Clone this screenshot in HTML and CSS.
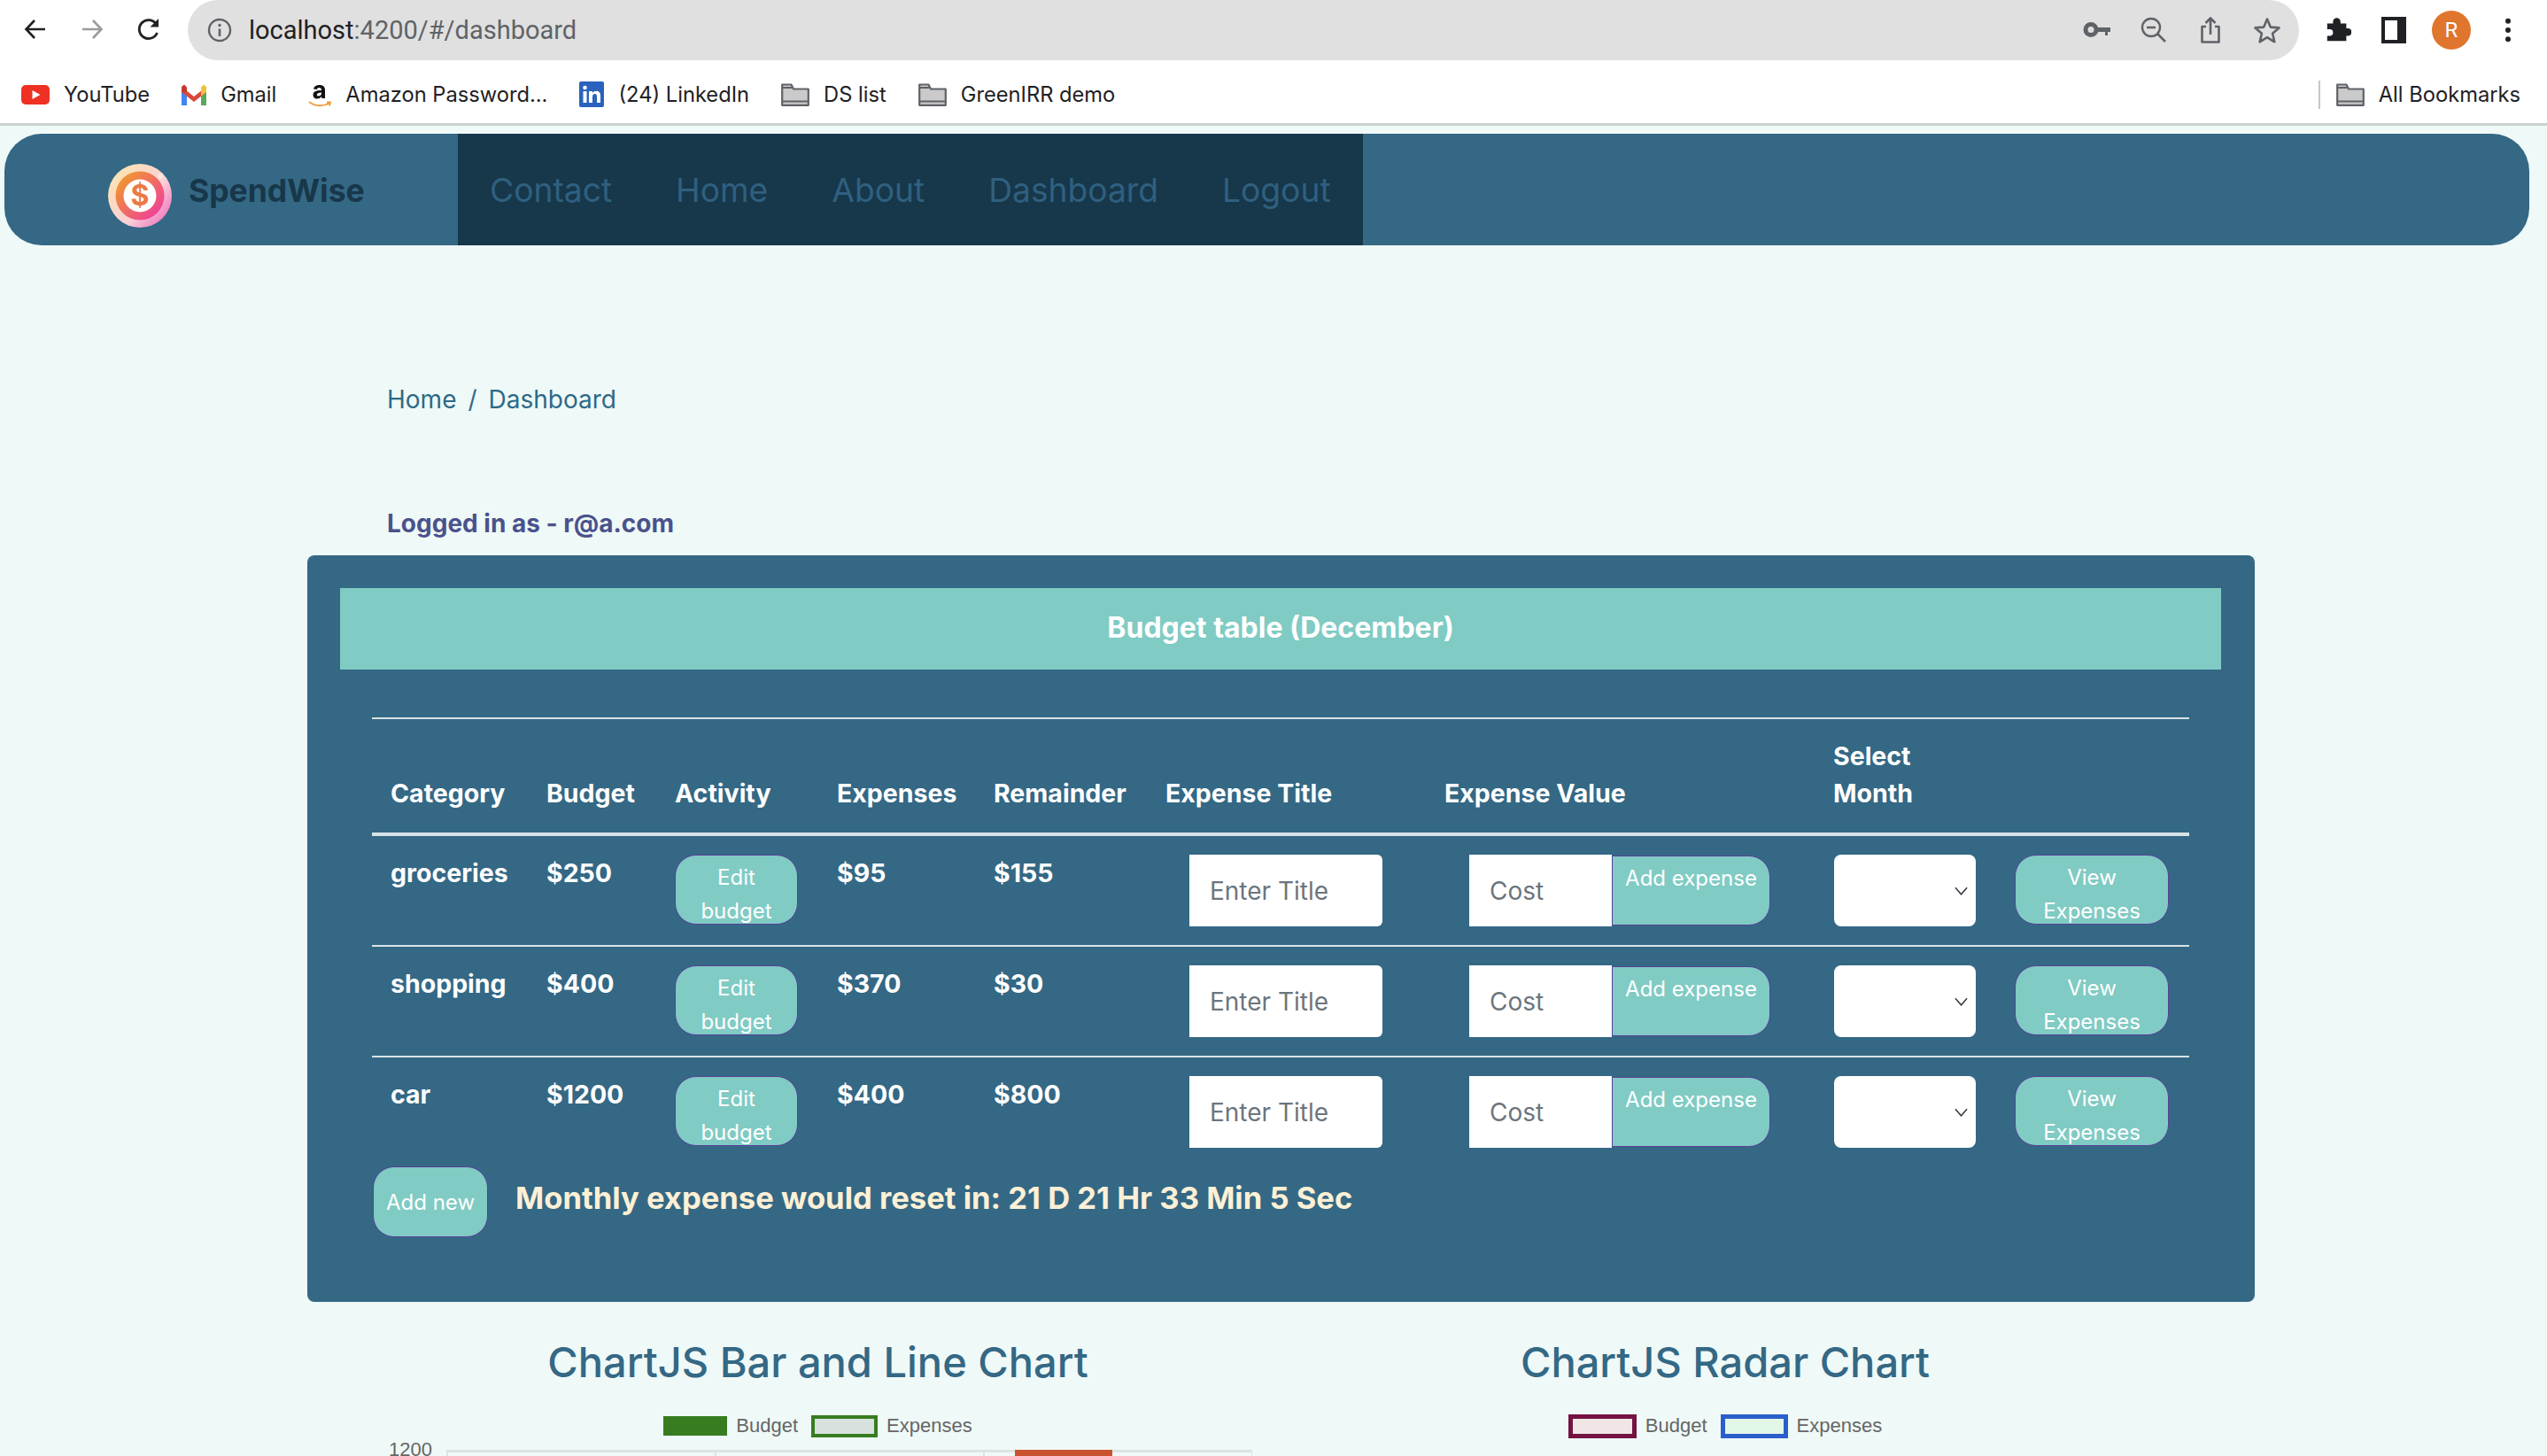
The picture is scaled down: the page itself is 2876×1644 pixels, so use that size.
FILE: index.html
```html
<!DOCTYPE html>
<html lang="en">
<head>
  <meta charset="UTF-8" />
  <title>SpendWise - Dashboard</title>
  <link rel="stylesheet" href="styles.css">
</head>
<body>

<!-- Browser toolbar -->
<div class="toolbar">
  <svg class="tool-icon nav-back" viewBox="0 0 30 30"><path d="M26 15H5M14 5L4.500 15L14 25" fill="none" stroke="#1f2124" stroke-width="2.600"/></svg>
  <svg class="tool-icon nav-forward" viewBox="0 0 30 30"><path d="M4 15H25M16 5L25.500 15L16 25" fill="none" stroke="#9a9b9d" stroke-width="2.600"/></svg>
  <svg class="tool-icon nav-reload" viewBox="0 0 30 30"><path d="M24.500 19A10.500 10.500 0 1 1 23 8.500" fill="none" stroke="#1f2124" stroke-width="2.800"/><path d="M26 3V12.500H16.500Z" fill="#1f2124"/></svg>
  <div class="address">
    <svg class="addr-info" viewBox="0 0 28 28"><circle cx="14" cy="14" r="12" fill="none" stroke="#5f6368" stroke-width="2.400"/><path d="M14 12.500V21" stroke="#5f6368" stroke-width="2.600"/><circle cx="14" cy="8.500" r="1.700" fill="#5f6368"/></svg>
    <span class="url"><span class="url-host">localhost</span>:4200/#/dashboard</span>
    <div class="addr-actions">
      <svg class="addr-icon" viewBox="0 0 32 32"><path d="M15 13H31V18H28V22H25V18H15Z" fill="#5f6368"/><circle cx="9" cy="15.500" r="6" fill="none" stroke="#5f6368" stroke-width="5"/></svg>
      <svg class="addr-icon" viewBox="0 0 32 32"><circle cx="13" cy="13" r="10" fill="none" stroke="#5f6368" stroke-width="2.400"/><path d="M8 13H18M20 20L29 29" stroke="#5f6368" stroke-width="2.600"/></svg>
      <svg class="addr-icon" viewBox="0 0 32 32"><path d="M11 12H6.500V29.500H25.500V12H21M16 21V2.500M10.500 8L16 2.500L21.500 8" fill="none" stroke="#5f6368" stroke-width="2.600" stroke-linejoin="round"/></svg>
      <svg class="addr-icon" viewBox="0 0 32 32"><path d="M16 3.500L19.800 12.600L29.500 13.400L22.100 19.800L24.300 29.300L16 24.200L7.700 29.300L9.900 19.800L2.500 13.400L12.200 12.600Z" fill="none" stroke="#5f6368" stroke-width="2.600" stroke-linejoin="round"/></svg>
    </div>
  </div>
  <svg class="ext-icon" viewBox="0 0 32 32"><path d="M3 9H10V7A4.500 4.500 0 0 1 19 7V9H26V15H28A4.500 4.500 0 0 1 28 24H26V30H3V24H6A3.500 3.500 0 0 0 6 16H3Z" fill="#1f2124"/></svg>
  <span class="panel-icon"><span class="panel-slot"></span></span>
  <span class="avatar">R</span>
  <svg class="dots-icon" viewBox="0 0 8 32"><circle cx="4" cy="5" r="3.200" fill="#1f2124"/><circle cx="4" cy="16" r="3.200" fill="#1f2124"/><circle cx="4" cy="27" r="3.200" fill="#1f2124"/></svg>
</div>

<!-- Bookmarks -->
<div class="bookmarks">
  <div class="bookmark">
    <svg class="bm-icon" viewBox="0 0 32 22"><rect width="32" height="22" rx="5" fill="#ee3124"/><path d="M12.500 6L21.500 11L12.500 16Z" fill="#fff"/></svg>
    <span>YouTube</span>
  </div>
  <div class="bookmark">
    <svg class="bm-icon gmail" viewBox="0 0 28 24"><path d="M0 4V24H6V9Z" fill="#4285f4"/><path d="M28 4V24H22V9Z" fill="#5aa85a"/><path d="M0 3L14 14L28 3V9L14 20L0 9Z" fill="#d9493b"/><path d="M22 3.500L25 0.500L28 3V9L22 13.500Z" fill="#f4c03c"/><path d="M0 3L3 0.500L6 3.500V9L0 9Z" fill="#c5392c"/></svg>
    <span>Gmail</span>
  </div>
  <div class="bookmark">
    <svg class="bm-icon amazon" viewBox="0 0 26 32"><path d="M6 9.500C6.500 6.500 9 5 12.500 5C16.500 5 19 6.800 19 10.500V20H15.500L15 18C13.500 19.800 12 20.500 10 20.500C7 20.500 5.500 18.500 5.500 16C5.500 12.500 8.500 11 15 11V10.500C15 9 14 8 12.500 8C11 8 10 8.700 9.700 10Z M15 13.500C11.500 13.700 9.800 14.500 9.800 15.800C9.800 16.900 10.500 17.500 11.500 17.500C13 17.500 15 16.500 15 14.500Z" fill="#111"/><path d="M1 24C8 29.500 17 29.500 24 25.500M21 24.500L25 24.500L24 28.500" fill="none" stroke="#f19e39" stroke-width="2"/></svg>
    <span>Amazon Password...</span>
  </div>
  <div class="bookmark">
    <svg class="bm-icon linkedin" viewBox="0 0 28 29"><rect width="28" height="29" rx="2" fill="#2a62bd"/><rect x="4.500" y="11" width="4" height="13" fill="#fff"/><circle cx="6.500" cy="7" r="2.300" fill="#fff"/><path d="M11 11H15V13C16 11.500 17.500 10.700 19.500 10.700C22.500 10.700 24 12.700 24 16V24H20V17C20 15 19.300 14 17.800 14C16 14 15 15.200 15 17.200V24H11Z" fill="#fff"/></svg>
    <span>(24) LinkedIn</span>
  </div>
  <div class="bookmark">
    <svg class="bm-icon folder" viewBox="0 0 32 26"><path d="M1.200 4V24.800H30.800V6.500H14L11.500 1.500H1.200Z" fill="#cacaca" stroke="#5f6368" stroke-width="2.200" stroke-linejoin="round"/><path d="M2 5H12M2 20.500H30" stroke="#5f6368" stroke-width="1.800"/></svg>
    <span>DS list</span>
  </div>
  <div class="bookmark">
    <svg class="bm-icon folder" viewBox="0 0 32 26"><path d="M1.200 4V24.800H30.800V6.500H14L11.500 1.500H1.200Z" fill="#cacaca" stroke="#5f6368" stroke-width="2.200" stroke-linejoin="round"/><path d="M2 5H12M2 20.500H30" stroke="#5f6368" stroke-width="1.800"/></svg>
    <span>GreenIRR demo</span>
  </div>
  <div class="bookmark bookmark-all">
    <svg class="bm-icon folder" viewBox="0 0 32 26"><path d="M1.200 4V24.800H30.800V6.500H14L11.500 1.500H1.200Z" fill="#cacaca" stroke="#5f6368" stroke-width="2.200" stroke-linejoin="round"/><path d="M2 5H12M2 20.500H30" stroke="#5f6368" stroke-width="1.800"/></svg>
    <span>All Bookmarks</span>
  </div>
</div>

<!-- Navbar -->
<nav class="navbar">
  <div class="brand">
    <svg class="logo" viewBox="0 0 72 72">
      <defs>
        <linearGradient id="logoOuter" x1="0.100" y1="0.200" x2="0.900" y2="0.900">
          <stop offset="0" stop-color="#fbe2b4"/>
          <stop offset="0.600" stop-color="#f9cfd8"/>
          <stop offset="1" stop-color="#f079c0"/>
        </linearGradient>
        <linearGradient id="logoInner" x1="0.100" y1="0.100" x2="0.900" y2="0.900">
          <stop offset="0" stop-color="#f09a2c"/>
          <stop offset="1" stop-color="#ef3f9a"/>
        </linearGradient>
      </defs>
      <circle cx="36" cy="36" r="36" fill="url(#logoOuter)"/>
      <circle cx="36" cy="36" r="27.500" fill="url(#logoInner)"/>
      <circle cx="36" cy="36" r="18.500" fill="#fff"/>
      <circle cx="59" cy="14" r="3" fill="#fbe9dc"/>
      <text class="logo-sign" x="36" y="47" text-anchor="middle">$</text>
    </svg>
    <span class="brand-name">SpendWise</span>
  </div>
  <ul class="nav-links">
    <li>Contact</li>
    <li>Home</li>
    <li>About</li>
    <li>Dashboard</li>
    <li>Logout</li>
  </ul>
</nav>

<main class="content">
  <div class="breadcrumb"><span>Home</span><span class="crumb-sep">/</span><span>Dashboard</span></div>
  <div class="logged-in">Logged in as - r@a.com</div>

  <section class="budget-card">
    <div class="budget-header">Budget table (December)</div>
    <table class="budget-table">
      <colgroup>
        <col class="c-cat"><col class="c-budget"><col class="c-activity"><col class="c-exp">
        <col class="c-rem"><col class="c-title"><col class="c-value"><col class="c-month"><col class="c-view">
      </colgroup>
      <thead>
        <tr>
          <th>Category</th>
          <th>Budget</th>
          <th>Activity</th>
          <th>Expenses</th>
          <th>Remainder</th>
          <th>Expense Title</th>
          <th>Expense Value</th>
          <th>Select<br>Month</th>
          <th></th>
        </tr>
      </thead>
      <tbody>
        <tr>
          <td>groceries</td>
          <td>$250</td>
          <td><button class="btn btn-two">Edit budget</button></td>
          <td>$95</td>
          <td>$155</td>
          <td><input class="field field-title" placeholder="Enter Title"></td>
          <td>
            <div class="input-group">
              <input class="field field-cost" placeholder="Cost">
              <button class="btn btn-add">Add expense</button>
            </div>
          </td>
          <td><select class="month"><option></option></select></td>
          <td><button class="btn btn-two btn-view">View Expenses</button></td>
        </tr>
        <tr>
          <td>shopping</td>
          <td>$400</td>
          <td><button class="btn btn-two">Edit budget</button></td>
          <td>$370</td>
          <td>$30</td>
          <td><input class="field field-title" placeholder="Enter Title"></td>
          <td>
            <div class="input-group">
              <input class="field field-cost" placeholder="Cost">
              <button class="btn btn-add">Add expense</button>
            </div>
          </td>
          <td><select class="month"><option></option></select></td>
          <td><button class="btn btn-two btn-view">View Expenses</button></td>
        </tr>
        <tr>
          <td>car</td>
          <td>$1200</td>
          <td><button class="btn btn-two">Edit budget</button></td>
          <td>$400</td>
          <td>$800</td>
          <td><input class="field field-title" placeholder="Enter Title"></td>
          <td>
            <div class="input-group">
              <input class="field field-cost" placeholder="Cost">
              <button class="btn btn-add">Add expense</button>
            </div>
          </td>
          <td><select class="month"><option></option></select></td>
          <td><button class="btn btn-two btn-view">View Expenses</button></td>
        </tr>
      </tbody>
    </table>
    <div class="budget-footer">
      <button class="btn btn-new">Add new</button>
      <span class="reset-note">Monthly expense would reset in: 21 D 21 Hr 33 Min 5 Sec</span>
    </div>
  </section>

  <!-- Charts, cut off by the bottom of the window -->
  <section class="charts">
    <div class="chart chart-bar">
      <h2 class="chart-title">ChartJS Bar and Line Chart</h2>
      <div class="legend">
        <span class="swatch swatch-green"></span><span class="legend-label">Budget</span>
        <span class="swatch swatch-green-line"></span><span class="legend-label">Expenses</span>
      </div>
      <div class="plot">
        <span class="tick-label">1200</span>
        <div class="plot-area">
          <span class="bar-red"></span>
        </div>
      </div>
    </div>
    <div class="chart chart-radar">
      <h2 class="chart-title">ChartJS Radar Chart</h2>
      <div class="legend">
        <span class="swatch swatch-maroon"></span><span class="legend-label">Budget</span>
        <span class="swatch swatch-blue"></span><span class="legend-label">Expenses</span>
      </div>
    </div>
  </section>
</main>

</body>
</html>
```

FILE: styles.css
```css
html, body {
  height: 100%;
}

body {
  margin: 0;
  background: #eff9f7;
  font-family: Inter, "Noto Sans", sans-serif;
  overflow: hidden;
}

/* browser chrome */
.toolbar {
  height: 71px;
  background: #fff;
  display: flex;
  align-items: flex-start;
}

.tool-icon {
  width: 30px;
  height: 30px;
  margin-top: 18px;
  flex: none;
}

.nav-back { margin-left: 25px; }
.nav-forward { margin-left: 34px; }
.nav-reload { margin-left: 34px; }

.address {
  width: 2384px;
  height: 68px;
  margin-left: 29px;
  background: #e0e0e0;
  border-radius: 34px;
  display: flex;
  align-items: center;
  flex: none;
}

.addr-info {
  width: 28px;
  height: 28px;
  margin-left: 22px;
}

.url {
  margin-left: 19px;
  font-family: Roboto, sans-serif;
  font-size: 29px;
  color: #5f6368;
}

.url-host {
  color: #1f2124;
}

.addr-actions {
  margin-left: auto;
  margin-right: 20px;
  display: flex;
  gap: 32px;
}

.addr-icon {
  width: 32px;
  height: 32px;
}

.ext-icon {
  width: 30px;
  height: 30px;
  margin: 18px 0 0 29px;
  flex: none;
}

.panel-icon {
  width: 28px;
  height: 30px;
  margin: 19px 0 0 34px;
  background: #1f2124;
  flex: none;
  display: flex;
  padding: 4px 0 4px 4px;
  box-sizing: border-box;
}

.panel-slot {
  width: 14px;
  background: #fff;
}

.avatar {
  width: 44px;
  height: 44px;
  margin: 12px 0 0 29px;
  border-radius: 50%;
  background: #e0752d;
  color: #fff;
  font-family: Roboto, sans-serif;
  font-size: 24px;
  display: flex;
  align-items: center;
  justify-content: center;
  flex: none;
}

.dots-icon {
  width: 8px;
  height: 30px;
  margin: 19px 0 0 38px;
  flex: none;
}

.bookmarks {
  height: 65px;
  padding: 3px 30px 0 24px;
  background: #fff;
  border-bottom: 3px solid #c9d3d1;
  display: flex;
  align-items: center;
  gap: 36px;
  font-family: Inter, sans-serif;
  font-size: 23.700px;
  color: #1f2124;
}

.bookmark {
  display: flex;
  align-items: center;
  gap: 16px;
}

.bm-icon {
  width: 32px;
  height: 22px;
}

.gmail { width: 28px; height: 24px; }
.amazon { width: 26px; height: 32px; }
.linkedin { width: 28px; height: 29px; }
.folder { width: 32px; height: 26px; }

.bookmark-all {
  margin-left: auto;
  padding-left: 18px;
  border-left: 2px solid #c4c7c5;
  height: 32px;
}

/* navbar */
.navbar {
  height: 126px;
  margin: 9px 20px 0 5px;
  background: #346885;
  border-radius: 42px;
  display: flex;
  overflow: hidden;
}

.brand {
  width: 512px;
  padding-left: 117px;
  box-sizing: border-box;
  display: flex;
  align-items: center;
  gap: 19px;
}

.logo {
  width: 72px;
  height: 72px;
  margin-top: 14px;
}

.logo-sign {
  font-family: Inter, sans-serif;
  font-size: 32px;
  font-weight: 700;
  fill: #ec7a45;
}

.brand-name {
  margin-top: 3px;
  font-size: 35.500px;
  font-weight: 700;
  color: #17374a;
}

.nav-links {
  margin: 0;
  padding: 0;
  list-style: none;
  background: #17374a;
  display: flex;
  align-items: center;
}

.nav-links li {
  padding: 0 36px;
  font-size: 37.200px;
  color: #2f6080;
}

/* page */
.content {
  margin: 0 330px 0 347px;
}

.breadcrumb {
  margin-top: 151px;
  padding-left: 90px;
  font-size: 28px;
  line-height: 46px;
  color: #2d6a88;
}

.crumb-sep {
  margin: 0 13px;
}

.logged-in {
  margin-top: 94px;
  padding-left: 90px;
  font-size: 28px;
  font-weight: 700;
  line-height: 46px;
  color: #4a528c;
}

.budget-card {
  margin-top: 13px;
  height: 843px;
  padding: 37px 38px 0 37px;
  box-sizing: border-box;
  background: #346885;
  border-radius: 8px;
}

.budget-header {
  height: 92px;
  padding-bottom: 3px;
  box-sizing: border-box;
  background: #80cbc4;
  color: #fff;
  font-size: 32px;
  font-weight: 700;
  display: flex;
  align-items: center;
  justify-content: center;
}

.budget-table {
  width: 2052px;
  margin: 54px 0 0 36px;
  border-collapse: collapse;
  table-layout: fixed;
  color: #fff;
  font-size: 28.500px;
  font-weight: 700;
  line-height: 42px;
}

.c-cat { width: 176px; }
.c-budget { width: 145px; }
.c-activity { width: 183px; }
.c-exp { width: 177px; }
.c-rem { width: 194px; }
.c-title { width: 315px; }
.c-value { width: 439px; }
.c-month { width: 205px; }
.c-view { width: 218px; }

.budget-table th {
  padding: 21px 21px 23px;
  text-align: left;
  vertical-align: bottom;
  border-top: 2px solid #d7e3e6;
  border-bottom: 4px solid #d7e3e6;
}

.budget-table td {
  padding: 21px;
  vertical-align: top;
  border-bottom: 2px solid #d7e3e6;
}

.budget-table tbody tr:last-child td {
  border-bottom: none;
}

.btn {
  background: #80cbc4;
  border: 1px solid #5a3f9a;
  border-radius: 24px;
  color: #fff;
  font-family: Inter, sans-serif;
  font-size: 24px;
  font-weight: 400;
  line-height: 38px;
  padding: 0;
  display: block;
}

.btn-two {
  width: 139px;
  height: 79px;
  padding: 6px 10px 0;
  box-sizing: border-box;
  overflow: visible;
  display: flex;
  align-items: flex-start;
  justify-content: center;
  text-align: center;
}

.btn-view {
  width: 174px;
}

.field {
  height: 81px;
  padding: 0 23px;
  box-sizing: border-box;
  border: none;
  border-radius: 0 6px 6px 0;
  background: #fff;
  font-family: Inter, sans-serif;
  font-size: 28px;
}

.field::placeholder {
  color: #6c757d;
}

.field-title {
  width: 218px;
  margin-left: 27px;
  display: block;
}

.input-group {
  display: flex;
  align-items: center;
  margin-left: 28px;
}

.field-cost {
  width: 161px;
  border-radius: 0;
}

.btn-add {
  width: 179px;
  height: 79px;
  padding-top: 6px;
  border-radius: 0 24px 24px 0;
  box-sizing: border-box;
  white-space: nowrap;
  display: flex;
  align-items: flex-start;
  justify-content: center;
}

.month {
  width: 160px;
  height: 81px;
  margin-left: 1px;
  display: block;
  border: none;
  border-radius: 8px;
  background: #fff url("data:image/svg+xml,%3Csvg xmlns='http://www.w3.org/2000/svg' viewBox='0 0 16 10'%3E%3Cpath d='M1 1l7 8 7-8' fill='none' stroke='%23343a40' stroke-width='1.600'/%3E%3C/svg%3E") no-repeat right 9px center / 15px 10px;
  appearance: none;
}

.budget-footer {
  display: flex;
  align-items: flex-start;
  margin-left: 37px;
}

.btn-new {
  width: 130px;
  height: 80px;
  flex: none;
  padding-top: 2px;
}

.reset-note {
  margin: 12px 0 0 31px;
  font-size: 34.600px;
  font-weight: 700;
  line-height: 46px;
  color: #fdf0d5;
  white-space: nowrap;
}

/* charts */
.charts {
  display: grid;
  grid-template-columns: 1153px 896px;
}

.chart-title {
  margin: 37px 0 0;
  text-align: center;
  font-size: 47px;
  font-weight: 500;
  line-height: 62px;
  color: #346885;
}

.legend {
  margin-top: 27px;
  height: 28px;
  display: flex;
  align-items: center;
  justify-content: center;
  font-family: "Liberation Sans", sans-serif;
  font-size: 22px;
  color: #666;
}

.legend-label {
  margin: 0 15px 0 10px;
}

.legend-label:last-child {
  margin-right: 0;
}

.swatch {
  box-sizing: border-box;
  display: block;
}

.swatch-green {
  width: 72px;
  height: 22px;
  background: #377d20;
}

.swatch-green-line {
  width: 75px;
  height: 25px;
  background: #d9e1df;
  border: 4px solid #377d20;
}

.swatch-maroon {
  width: 77px;
  height: 27px;
  background: #f0e6e5;
  border: 5px solid #741342;
}

.swatch-blue {
  width: 76px;
  height: 27px;
  background: #e3f7e8;
  border: 5px solid #2a5fcb;
}

.plot {
  display: flex;
  margin: 0 0 0 92px;
  height: 200px;
}

.tick-label {
  width: 65px;
  font-family: "Liberation Sans", sans-serif;
  font-size: 22px;
  line-height: 26px;
  color: #666;
}

.plot-area {
  position: relative;
  width: 910px;
  height: 200px;
  margin-top: 13px;
  border-top: 3px solid #dbe4e3;
  background: linear-gradient(90deg, #dbe4e3 2px, transparent 2px) 0 0 / 303px 100%;
}

.bar-red {
  position: absolute;
  left: 642px;
  top: -3px;
  width: 110px;
  height: 200px;
  background: #c9532f;
}
```
